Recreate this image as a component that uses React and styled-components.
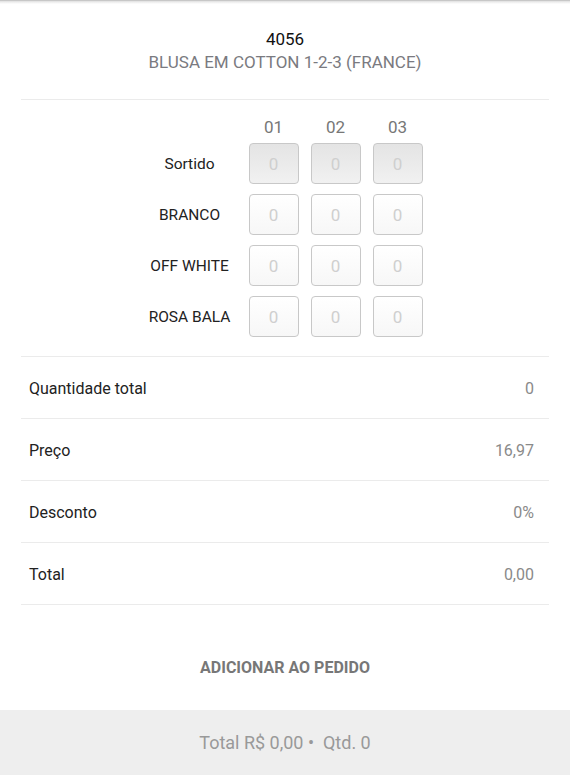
import React from "react";
import styled, { createGlobalStyle } from "styled-components";

const Global = createGlobalStyle`
  html, body { margin: 0; padding: 0; background: #fff; }
  body { font-family: Roboto, "Noto Sans", Arial, sans-serif; -webkit-font-smoothing: antialiased; }
  * { box-sizing: border-box; }
`;

const Page = styled.div`
  min-height: 100vh;
  display: flex;
  flex-direction: column;
  background: #fff;
`;

const TopShadow = styled.div`
  height: 4px;
  background: linear-gradient(#b8b8b8, #e8e8e8 40%, rgba(255,255,255,0));
`;

const Main = styled.div`
  flex: 1;
  padding: 0 21px;
  display: flex;
  flex-direction: column;
`;

const Header = styled.div`
  padding-top: 24px;
  padding-bottom: 25px;
  text-align: center;
  border-bottom: 1px solid #ebebeb;
`;

const Code = styled.div`
  font-size: 17px;
  line-height: 23px;
  color: #111;
`;

const Name = styled.div`
  font-size: 17px;
  line-height: 23px;
  color: #7a7a80;
`;

const GridWrap = styled.div`
  padding: 18px 0 19px;
  border-bottom: 1px solid #ebebeb;
  display: flex;
  justify-content: center;
`;

const Grid = styled.div`
  display: grid;
  grid-template-columns: 94px repeat(3, 50px);
  column-gap: 12px;
  row-gap: 10px;
  margin-left: -5px;
`;

const ColHead = styled.div`
  font-size: 17px;
  line-height: 18px;
  color: #777;
  text-align: center;
  margin-bottom: -3px;
`;

const RowLabel = styled.div`
  font-size: 15.5px;
  color: #222;
  display: flex;
  align-items: center;
  justify-content: center;
  white-space: nowrap;
`;

const Cell = styled.div`
  height: 41px;
  border: 1px solid #c8c8c8;
  border-radius: 4px;
  display: flex;
  align-items: center;
  justify-content: center;
  font-size: 17px;
  color: #cfcfcf;
  background: ${(p) =>
    p.$disabled
      ? "linear-gradient(#e4e4e4, #f1f1f1)"
      : "linear-gradient(#ffffff, #f7f7f7)"};
`;

const SummaryRow = styled.div`
  height: 62px;
  border-bottom: 1px solid #ebebeb;
  display: flex;
  align-items: center;
  justify-content: space-between;
  padding: 1px 15px 0 8px;
`;

const SumLabel = styled.span`
  font-size: 16px;
  color: #222;
`;

const SumValue = styled.span`
  font-size: 16px;
  color: #8a8a8a;
`;

const AddButton = styled.button`
  margin-top: 40px;
  height: 44px;
  border: none;
  background: transparent;
  font-family: inherit;
  font-size: 16px;
  font-weight: 700;
  color: #777;
  cursor: pointer;
`;

const Footer = styled.div`
  height: 65px;
  background: #eeeeee;
  display: flex;
  align-items: center;
  justify-content: center;
  font-size: 18px;
  color: #999;
  white-space: pre;
`;

const sizes = ["01", "02", "03"];
const colors = ["Sortido", "BRANCO", "OFF WHITE", "ROSA BALA"];
const summary = [
  ["Quantidade total", "0"],
  ["Preço", "16,97"],
  ["Desconto", "0%"],
  ["Total", "0,00"],
];

export default function App() {
  return (
    <Page>
      <Global />
      <TopShadow />
      <Main>
        <Header>
          <Code>4056</Code>
          <Name>BLUSA EM COTTON 1-2-3 (FRANCE)</Name>
        </Header>
        <GridWrap>
          <Grid>
            <div />
            {sizes.map((s) => (
              <ColHead key={s}>{s}</ColHead>
            ))}
            {colors.map((c, i) => (
              <React.Fragment key={c}>
                <RowLabel>{c}</RowLabel>
                {sizes.map((s) => (
                  <Cell key={s} $disabled={i === 0}>0</Cell>
                ))}
              </React.Fragment>
            ))}
          </Grid>
        </GridWrap>
        {summary.map(([l, v]) => (
          <SummaryRow key={l}>
            <SumLabel>{l}</SumLabel>
            <SumValue>{v}</SumValue>
          </SummaryRow>
        ))}
        <AddButton>ADICIONAR AO PEDIDO</AddButton>
      </Main>
      <Footer>{"Total R$ 0,00 •  Qtd. 0"}</Footer>
    </Page>
  );
}
